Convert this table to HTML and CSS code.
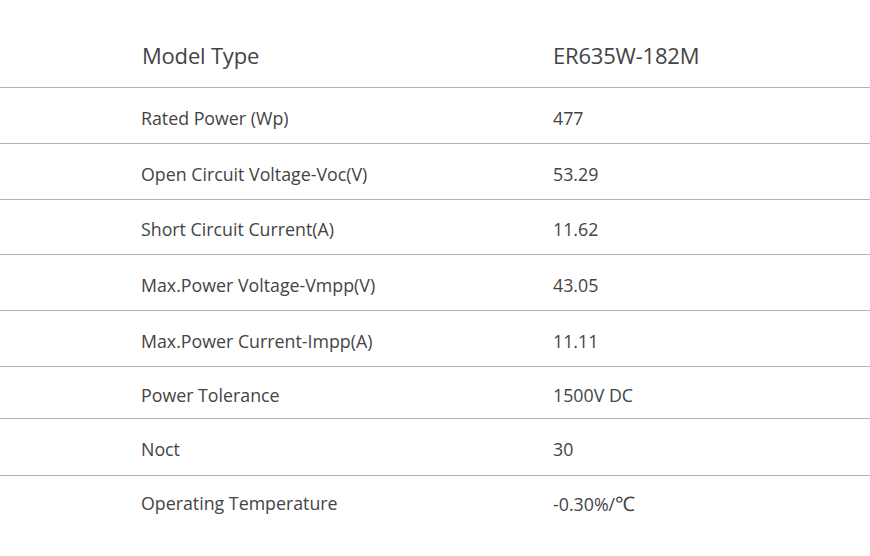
FILE: index.html
```html
<!DOCTYPE html>
<html>
<head>
<meta charset="utf-8">
<link rel="stylesheet" href="styles.css">
</head>
<body>
<div class="spec">
  <div class="row head"><div class="k">Model Type</div><div class="v">ER635W-182M</div></div>
  <div class="row"><div class="k">Rated Power (Wp)</div><div class="v">477</div></div>
  <div class="row"><div class="k">Open Circuit Voltage-Voc(V)</div><div class="v">53.29</div></div>
  <div class="row r55"><div class="k">Short Circuit Current(A)</div><div class="v">11.62</div></div>
  <div class="row"><div class="k">Max.Power Voltage-Vmpp(V)</div><div class="v">43.05</div></div>
  <div class="row"><div class="k">Max.Power Current-Impp(A)</div><div class="v">11.11</div></div>
  <div class="row short"><div class="k">Power Tolerance</div><div class="v">1500V DC</div></div>
  <div class="row tall"><div class="k">Noct</div><div class="v">30</div></div>
  <div class="row last"><div class="k">Operating Temperature</div><div class="v">-0.30%/<span class="deg">℃</span></div></div>
</div>
</body>
</html>
```
FILE: styles.css
```css
html, body {
  margin: 0;
  padding: 0;
  background: #fff;
}
body {
  font-family: "Open Sans", "Liberation Sans", sans-serif;
  color: #444;
}
.spec {
  display: flex;
  flex-direction: column;
  width: 870px;
}
.row {
  display: grid;
  grid-template-columns: 412px 1fr;
  padding-left: 141px;
  align-items: center;
  border-bottom: 1px solid #b3b3b3;
  font-size: 17.8px;
  letter-spacing: 0;
  padding-top: 4px;
  box-sizing: border-box;
  height: 56px;
}
.row.head {
  height: 88px;
  padding-top: 23px;
  font-size: 22px;
  letter-spacing: -0.2px;
}
.row.head .k {
  padding-left: 1px;
}
.row.r55 { height: 55px; }
.row.short { height: 52px; }
.row.tall { height: 57px; }
.row.last {
  border-bottom: none;
  height: 56px;
  padding-top: 0;
  padding-bottom: 2px;
}
.deg {
  font-size: 20px;
}
```
